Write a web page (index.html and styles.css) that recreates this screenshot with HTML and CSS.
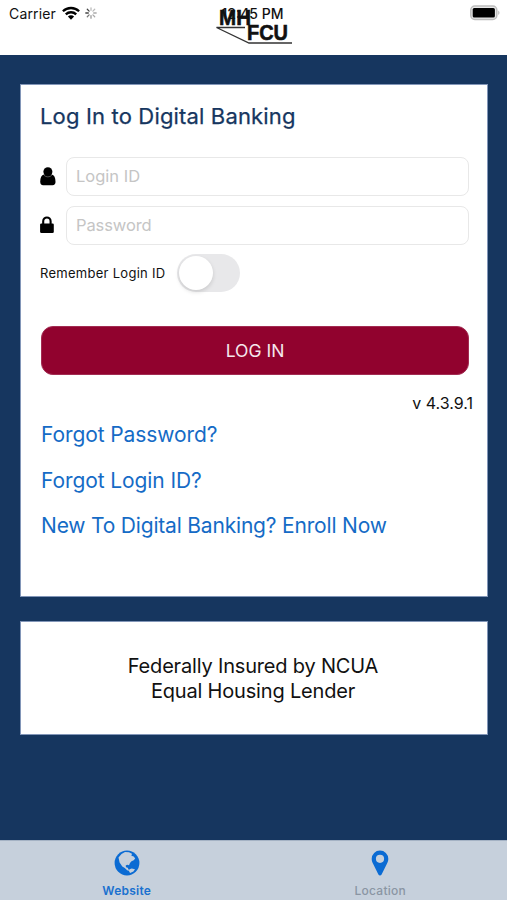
FILE: index.html
```html
<!DOCTYPE html>
<html lang="en">
<head>
<meta charset="utf-8">
<title>Digital Banking</title>
<link rel="stylesheet" href="styles.css">
</head>
<body>
<div class="app">
  <header class="header">
    <div class="carrier">
      <span class="carrier-name">Carrier</span>
      <svg class="wifi" viewBox="0 0 18 14" width="18" height="14"><g fill="none" stroke="#000" stroke-width="2.3"><path d="M.9 5.3a11.6 11.6 0 0 1 16.2 0"/><path d="M3.8 8.4a7.4 7.4 0 0 1 10.4 0"/></g><path d="M9 13.7 5.9 10.5a4.4 4.4 0 0 1 6.2 0z"/></svg>
      <svg class="spinner" viewBox="-6 -6 12 12" width="12" height="12" stroke-width="1.3" stroke-linecap="round"><path stroke="#bbb" d="M0-2.7V-5.2M1.9-1.9 3.7-3.7"/><path stroke="#aaa" d="M2.7 0H5.2M1.9 1.9 3.7 3.7"/><path stroke="#999" d="M0 2.7V5.2"/><path stroke="#777" d="M-1.9 1.9-3.7 3.7"/><path stroke="#444" d="M-2.7 0H-5.2M-1.9-1.9-3.7-3.7"/></svg>
    </div>
    <div class="brand">
      <svg class="logo" viewBox="0 0 80 48" width="80" height="48"><path d="M31 27.500H2.500L35 43H78" fill="none" stroke="#333" stroke-width="1.3"/><g class="logo-text"><text x="5" y="25" textLength="32" lengthAdjust="spacingAndGlyphs">MH</text><text x="33" y="40" textLength="41" lengthAdjust="spacingAndGlyphs">FCU</text></g></svg>
      <span class="clock">12:45 PM</span>
    </div>
    <svg class="battery" viewBox="0 0 31 16" width="31" height="16"><rect x=".8" y="1" width="26" height="13.5" rx="4" fill="#e8e8e8" stroke="#bdbdbd" stroke-width="1.5"/><rect x="2.700" y="3" width="22.200" height="9.500" rx="1.500"/><path d="M28.4 5.500q2 2.200 0 4.600z" fill="#aaa"/></svg>
  </header>
  <main class="content">
    <section class="card login">
      <h1 class="title">Log In to Digital Banking</h1>
      <div class="field">
        <svg class="field-icon" viewBox="0 0 16 19" width="16" height="19"><path d="M4 7.500C1.500 8 .2 10.600 .2 14.700c0 2.300 1 3.500 3 3.500h9.300c2 0 3-1.200 3-3.500 0-4.100-1.300-6.700-3.800-7.200z"/><circle cx="7.900" cy="4.700" r="4.500"/><path d="M3.900 8.200a5.600 5.600 0 0 0 8 0" fill="none" stroke="#888" stroke-width=".6"/></svg>
        <input class="input" id="login" placeholder="Login ID">
      </div>
      <div class="field">
        <svg class="field-icon lock" viewBox="0 0 16 19" width="16" height="19"><rect x=".1" y="7.500" width="13.700" height="9.500" rx="1.300"/><path d="M3.200 8V5.200a3.700 3.700 0 0 1 7.400 0V8" fill="none" stroke="#000" stroke-width="2.100"/></svg>
        <input class="input password" id="password" type="password" placeholder="Password">
      </div>
      <div class="remember"><span class="remember-label">Remember Login ID</span><span class="switch"><i class="knob"></i></span></div>
      <button class="submit"><span>LOG IN</span></button>
      <div class="version"><span>v 4.3.9.1</span></div>
      <nav class="links"><a class="forgot-pw">Forgot Password?</a><a class="forgot-id">Forgot Login ID?</a><a class="enroll">New To Digital Banking? Enroll Now</a></nav>
    </section>
    <section class="card legal"><span class="insured">Federally Insured by NCUA</span><span class="lender">Equal Housing Lender</span></section>
  </main>
  <footer class="tabs">
    <div class="tab active">
      <svg viewBox="0 0 26 26" width="26" height="26"><circle cx="13" cy="13" r="12.400" fill="#0b6bd3"/><path fill="#c6d0dc" d="M4.500 7.500 7.500 4 11 2l4 .3 3 1.500-.6 2 2.300.7 1.500 2-1.500 1.800-2.200 1-1.500 1.800-1 2.200-1.800-.6-1.500.9.300 1.600 1.700.6.800 1.700 1.700.8-.6.800-2.500-.8-2.300-2.200-2.500-1.600L5.600 12.500zM15.500 19.300l2.200-.9 3.300.8-1.600 2.300-3.300 1.600-1-1.600z"/></svg>
      <span class="tab-name">Website</span>
    </div>
    <div class="tab">
      <svg viewBox="0 0 26 26" width="26" height="26"><path fill="#0b6bd3" fill-rule="evenodd" d="M13 .5a8.300 8.300 0 0 0-8.300 8.300c0 2 .6 3.500 1.500 5.200l5.200 10.500c.7 1.300 2.500 1.300 3.200 0L19.800 14c.9-1.700 1.500-3.200 1.500-5.200A8.300 8.300 0 0 0 13 .5zm0 4.200a4.100 4.100 0 1 1 0 8.200 4.100 4.100 0 0 1 0-8.200z"/></svg>
      <span class="tab-name">Location</span>
    </div>
  </footer>
</div>
</body>
</html>
```
FILE: styles.css
```css
* { box-sizing: border-box; }
body { margin: 0; font-family: Inter, "Liberation Sans", sans-serif; color: #111; }
.app { height: 900px; display: flex; flex-direction: column; background: #16365f; }
.header { height: 55px; background: #fff; display: grid; grid-template-columns: 1fr 80px 1fr; align-items: start; }
.carrier { display: flex; align-items: center; height: 26px; padding-left: 9px; }
.carrier-name { font-size: 14px; letter-spacing: .15px; white-space: nowrap; padding-top: 1px; }
.wifi { margin-left: 6px; }
.spinner { margin-left: 5px; }
.brand { position: relative; height: 48px; }
.logo { display: block; }
.logo-text { font: bold 22.5px "Liberation Sans", sans-serif; fill: #111; stroke: #111; stroke-width: .6px; }
.clock { position: absolute; right: 10px; top: 5px; font-size: 14px; line-height: 17px; font-weight: 500; white-space: nowrap; }
.battery { justify-self: end; margin: 5px 6px 0 0; }
.content { flex: 1; padding: 29px 19px 0 20px; display: flex; flex-direction: column; gap: 24px; }
.card { background: #fff; border: 1px solid #8296b8; }
.login { height: 513px; padding: 17px 18px 0 19px; }
.title { margin: 0 0 26px; font-size: 22px; line-height: 29px; font-weight: 400; letter-spacing: .16px; color: #16365f; -webkit-text-stroke: .25px #16365f; }
.field { display: flex; align-items: center; height: 39px; margin-bottom: 10px; }
.field-icon { flex: none; margin-right: 10px; }
.input { flex: 1; min-width: 0; height: 39px; border: 1px solid #e8e8e8; border-radius: 8px; padding: 0 9px 1px; font: 16.5px Inter, sans-serif; background: #fff; outline: 0; }
.password { letter-spacing: -.1px; }
.input::placeholder { color: #c5c5c5; opacity: 1; }
.remember { display: flex; align-items: center; height: 38px; margin-top: -1px; }
.remember-label { font-size: 13px; letter-spacing: .28px; white-space: nowrap; width: 126px; margin-right: 11px; }
.switch { width: 63px; height: 38px; border-radius: 19px; background: #e8e8ea; padding: 2px; }
.knob { display: block; width: 34px; height: 34px; border-radius: 50%; background: #fff; box-shadow: 0 2px 4px #0002; }
.submit { display: block; width: 428px; height: 49px; margin: 34px 0 0 1px; border: 1px solid #a22c52; border-radius: 12px; background: #91022e; color: #f5e8ed; font: 17.5px Inter, sans-serif; }
.version { display: flex; justify-content: flex-end; height: 20px; margin: 18px -4px 0 0; font-size: 16px; line-height: 20px; }
.links { display: flex; flex-direction: column; gap: 15.5px; margin: 7px 0 0 1px; color: #156bc6; font-size: 21px; line-height: 30px; letter-spacing: -.1px; }
.links a { white-space: nowrap; align-self: flex-start; }
.enroll { letter-spacing: -.19px; }
.legal { height: 114px; display: flex; flex-direction: column; align-items: center; padding: 32px 2px 0 0; font-size: 20px; line-height: 25px; letter-spacing: -.18px; }
.tabs { height: 60px; background: #c6d0dc; border-top: 1px solid #a4b2c4; display: grid; grid-template-columns: 1fr 1fr; }
.tab { display: flex; flex-direction: column; align-items: center; padding-top: 9px; color: #8a95a3; font-size: 12px; line-height: 16px; }
.tab svg { margin-bottom: 7px; }
.tab-name { font-weight: 500; letter-spacing: .25px; }
.active { color: #1a70cf; }
.active .tab-name { font-weight: 600; }
```
